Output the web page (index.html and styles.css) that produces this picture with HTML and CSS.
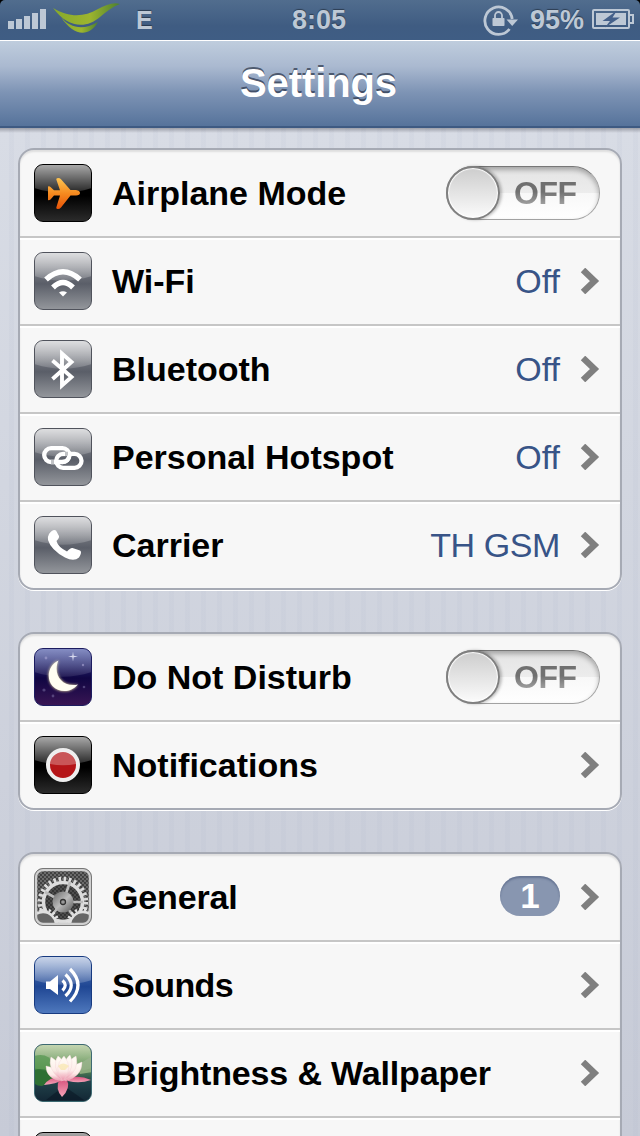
FILE: index.html
```html
<!DOCTYPE html>
<html lang="en">
<head>
  <meta charset="UTF-8">
  <meta name="viewport" content="width=device-width, initial-scale=1.0">
  <title>Settings</title>
  <link rel="stylesheet" href="styles.css">
</head>
<body>
  <!-- shared shapes -->
  <svg class="defs" width="0" height="0">
    <defs>
      <linearGradient id="glossFill" x1="0" y1="0" x2="0" y2="1">
        <stop offset="0" stop-color="#fff" stop-opacity=".68"/>
        <stop offset="1" stop-color="#fff" stop-opacity=".14"/>
      </linearGradient>
      <linearGradient id="orange" x1="0" y1="0" x2="0" y2="1">
        <stop offset="0" stop-color="#ffc653"/>
        <stop offset=".5" stop-color="#f58a1f"/>
        <stop offset="1" stop-color="#e75208"/>
      </linearGradient>
      <linearGradient id="leaf" x1="0" y1="0" x2="1" y2="0">
        <stop offset="0" stop-color="#86a92c"/>
        <stop offset=".55" stop-color="#9db52e"/>
        <stop offset="1" stop-color="#4c8030"/>
      </linearGradient>
      <linearGradient id="steel" x1="0" y1="0" x2="1" y2="1">
        <stop offset="0" stop-color="#666"/>
        <stop offset=".5" stop-color="#bbb"/>
        <stop offset="1" stop-color="#555"/>
      </linearGradient>
      <linearGradient id="petal" x1="0" y1="0" x2="0" y2="1">
        <stop offset="0" stop-color="#fffdf5"/>
        <stop offset=".6" stop-color="#fdebe8"/>
        <stop offset="1" stop-color="#ea8fa8"/>
      </linearGradient>
      <linearGradient id="petalPink" x1="0" y1="0" x2="0" y2="1">
        <stop offset="0" stop-color="#d8567f"/>
        <stop offset="1" stop-color="#f5a3b8"/>
      </linearGradient>
      <linearGradient id="pond" x1="0" y1="0" x2="0" y2="1">
        <stop offset="0" stop-color="#b9cda0"/>
        <stop offset=".4" stop-color="#5d9053"/>
        <stop offset=".65" stop-color="#21424a"/>
        <stop offset="1" stop-color="#122634"/>
      </linearGradient>
      <pattern id="mesh" width="4" height="4" patternUnits="userSpaceOnUse">
        <rect width="4" height="4" fill="#6a6a6a"/>
        <circle cx="1" cy="1" r=".9" fill="#2c2c2c"/>
        <circle cx="3" cy="3" r=".9" fill="#2c2c2c"/>
      </pattern>
      <path id="gloss" d="M0 0H58V24Q29 33.500 0 24Z" fill="url(#glossFill)"/>
      <path id="chevron" d="M3 2L14.500 13L3 24" fill="none" stroke="#7f7f7f" stroke-width="6.400"/>
    </defs>
  </svg>

  <header class="status-bar">
    <div class="status-left">
      <svg class="signal" width="38" height="20" viewBox="0 0 38 20">
        <path d="M0 12h6v8H0zM8 10h6v10H8zM16 7h6v13h-6zM24 4h6v16h-6zM32 0h6v20h-6z" fill="#bdc8d5"/>
      </svg>
      <svg class="carrier-logo" width="67" height="31" viewBox="0 0 67 31">
        <path d="M0 5C17 15 31 14 45 6C53 2 60-1 67 1C59 4 53 9 47 14C33 26 15 25 0 5Z" fill="url(#leaf)"/>
        <path d="M8 14C17 25 30 28 45 19C36 35 20 33 8 14Z" fill="url(#leaf)"/>
      </svg>
      <span class="network">E</span>
    </div>
    <span class="clock">8:05</span>
    <div class="status-right">
      <svg width="35" height="32" viewBox="0 0 35 32">
        <path d="M26.500 25A13.700 13.700 0 1 1 29.200 15" fill="none" stroke="#bdc8d5" stroke-width="2.800"/>
        <path d="M23.500 15.500H35L29.200 22Z" fill="#bdc8d5"/>
        <rect x="9.500" y="14" width="12" height="8" rx=".8" fill="#bdc8d5"/>
        <path d="M12 14v-2.500a3.500 3.500 0 0 1 7 0V14" fill="none" stroke="#bdc8d5" stroke-width="1.800"/>
      </svg>
      <span class="percent">95%</span>
      <svg class="battery" width="42" height="20" viewBox="0 0 42 20">
        <rect x="1" y="1" width="36" height="18" rx="1" fill="none" stroke="#bdc8d5" stroke-width="2"/>
        <rect x="4" y="4" width="30" height="12" fill="#bdc8d5"/>
        <path d="M38 6h3v8h-3" fill="none" stroke="#bdc8d5" stroke-width="2"/>
        <path d="M25 1.500L10.500 12H18L13 18.500L28 8.500H20.500Z" fill="#44608a"/>
      </svg>
    </div>
  </header>

  <nav class="nav-bar">
    <h1>Settings</h1>
  </nav>

  <main>
    <ul class="group">
      <li class="row">
        <svg class="icon black" viewBox="1 1 56 56">
          <use href="#gloss"/>
          <path d="M14 22.500Q15.500 22 16.500 23L20 26.200H26L22.300 15.500Q22 14 24 14Q26 14 27 15.200L36.500 26H42Q46 26.500 46 29Q46 31.200 42 31.600H36.500L27 43.500Q25.500 45 24 45Q22 45 22.300 43.500L26 31.600H20L16.500 35.500Q15 36.500 14 36Z" fill="url(#orange)"/>
        </svg>
        <span class="label">Airplane Mode</span>
        <span class="switch"><span class="knob"></span><span class="off">OFF</span></span>
      </li>
      <li class="row">
        <svg class="icon gray" viewBox="1 1 56 56">
          <use href="#gloss"/>
          <g fill="none" stroke="#fff" stroke-width="5.400">
            <path d="M12 27.500Q29 12 46 27.500"/>
            <path d="M19 35.500Q29 25.500 39 35.500"/>
          </g>
          <path d="M25 40.500Q29 38 33 40.500L29 44.500Z" fill="#fff"/>
        </svg>
        <span class="label">Wi-Fi</span>
        <span class="value">Off</span>
        <svg class="chevron" viewBox="0 0 20 26"><use href="#chevron"/></svg>
      </li>
      <li class="row">
        <svg class="icon gray" viewBox="1 1 56 56">
          <use href="#gloss"/>
          <path d="M18.500 20.500L37.500 37L28 45.500V13.500L37.500 22L18.500 39" fill="none" stroke="#fff" stroke-width="3.900"/>
        </svg>
        <span class="label">Bluetooth</span>
        <span class="value">Off</span>
        <svg class="chevron" viewBox="0 0 20 26"><use href="#chevron"/></svg>
      </li>
      <li class="row">
        <svg class="icon gray" viewBox="1 1 56 56">
          <use href="#gloss"/>
          <g fill="none" stroke-width="4.300">
            <rect x="10.200" y="20.200" width="25.200" height="13.800" rx="6.900" stroke="#fff"/>
            <rect x="22.200" y="25.900" width="25.300" height="13.900" rx="6.900" stroke="#fff"/>
            <path d="M17 34h3M31 25.900h3" stroke="#c0c2c5"/>
            <path d="M35.400 27.500A6.900 6.900 0 0 1 28.500 34" stroke="#fff"/>
          </g>
        </svg>
        <span class="label">Personal Hotspot</span>
        <span class="value">Off</span>
        <svg class="chevron" viewBox="0 0 20 26"><use href="#chevron"/></svg>
      </li>
      <li class="row">
        <svg class="icon gray" viewBox="1 1 56 56">
          <use href="#gloss"/>
          <path d="M15 18Q19 12.500 22 14.500L25 20Q25.500 22 22.500 25Q24 31 33 35.500Q36.500 31.500 38.500 32L46 34.500Q48.500 36 45 41.500Q40 46 31 41.500Q17 34 14 24Q13.500 20.500 15 18Z" fill="#fff"/>
        </svg>
        <span class="label">Carrier</span>
        <span class="value snug">TH GSM</span>
        <svg class="chevron" viewBox="0 0 20 26"><use href="#chevron"/></svg>
      </li>
    </ul>

    <ul class="group">
      <li class="row">
        <svg class="icon night" viewBox="1 1 56 56">
          <use href="#gloss" opacity=".6"/>
          <g fill="#a9a5d4">
            <path d="M39 3.500L39.700 7.700L44 8.500L39.700 9.300L39 13.500L38.300 9.300L34 8.500L38.300 7.700Z" fill="#d7d9ee"/>
            <g opacity=".6">
              <circle cx="12" cy="10" r="1.400"/>
              <circle cx="49" cy="17" r="1.200"/>
            </g>
            <g opacity=".35">
              <circle cx="10" cy="42" r="1.600"/>
              <circle cx="50" cy="39" r="1.300"/>
              <circle cx="19" cy="48" r="1.400"/>
            </g>
          </g>
          <path class="moon" d="M24.500 12.500C18.500 25 27 40 44 36.500C36 45.500 25 44.500 18.500 38C12 30.500 14 17.500 24.500 12.500Z" fill="#fffef2"/>
        </svg>
        <span class="label">Do Not Disturb</span>
        <span class="switch"><span class="knob"></span><span class="off">OFF</span></span>
      </li>
      <li class="row">
        <svg class="icon black" viewBox="1 1 56 56">
          <use href="#gloss"/>
          <circle cx="29" cy="29" r="15" fill="#b51518" stroke="#eee" stroke-width="4"/>
          <path d="M16 28A13 13 0 0 1 42 28Q29 30.500 16 28Z" fill="#fff" fill-opacity=".28"/>
        </svg>
        <span class="label">Notifications</span>
        <svg class="chevron" viewBox="0 0 20 26"><use href="#chevron"/></svg>
      </li>
    </ul>

    <ul class="group">
      <li class="row">
        <svg class="icon gear" viewBox="1 1 56 56">
          <rect x="3" y="3" width="52" height="52" rx="4" fill="url(#mesh)"/>
          <svg x="3" y="3" width="52" height="52" viewBox="3 3 52 52">
            <circle cx="29" cy="34" r="18" fill="#222" fill-opacity=".4"/>
            <g fill="none" stroke="#dcdcdc">
              <circle cx="29" cy="34" r="19.500" stroke-width="3.500"/>
              <circle cx="29" cy="34" r="23" stroke-width="4.500" stroke-dasharray="2.500 2.660"/>
              <path d="M29 34L36 14M29 34L11 24M29 34H49M29 34L16 49M29 34L41 50" stroke="#bbb" stroke-width="2.600"/>
            </g>
            <circle cx="29" cy="34" r="10.500" fill="url(#steel)"/>
            <circle cx="29" cy="34" r="2.500" fill="#999" stroke="#333" stroke-width="1.300"/>
            <g fill="#666" stroke="#e0e0e0">
              <circle cx="9" cy="57" r="13" stroke-width="2.500"/>
              <circle cx="49" cy="57" r="13" stroke-width="2.500"/>
              <g fill="none" stroke-width="3.500" stroke-dasharray="2.300 2.300">
                <circle cx="9" cy="57" r="15.500"/>
                <circle cx="49" cy="57" r="15.500"/>
              </g>
            </g>
          </svg>
          <rect x="2" y="2" width="54" height="54" rx="7" fill="none" stroke="#d0d0d0" stroke-width="2.500"/>
        </svg>
        <span class="label snug">General</span>
        <span class="badge">1</span>
        <svg class="chevron" viewBox="0 0 20 26"><use href="#chevron"/></svg>
      </li>
      <li class="row">
        <svg class="icon blue" viewBox="1 1 56 56">
          <use href="#gloss"/>
          <path d="M12 25.500H16L24 19V39L16 33H12Z" fill="#fff"/>
          <g fill="none" stroke="#fff" stroke-width="3.200">
            <path d="M28.500 24.500Q34 29 28.500 34.500"/>
            <path d="M31.500 18.500Q43 29 31.500 40"/>
            <path d="M36 13Q52 29 36 45.500"/>
          </g>
        </svg>
        <span class="label tight">Sounds</span>
        <svg class="chevron" viewBox="0 0 20 26"><use href="#chevron"/></svg>
      </li>
      <li class="row">
        <svg class="icon photo" viewBox="1 1 56 56">
          <rect width="58" height="58" fill="url(#pond)"/>
          <path d="M0 12Q14 8 20 20L12 34L0 38Z" fill="#4f9147"/>
          <path d="M58 12L42 22L46 30L58 28Z" fill="#8aa97c"/>
          <path d="M0 26Q12 22 24 34L8 42Q2 42 0 39Z" fill="#2d7033"/>
          <path d="M30 42L50 56H12Z" fill="#0a1824" opacity=".6"/>
          <g fill="url(#petalPink)">
            <path d="M28 33Q16 32 10 41Q22 40 29 36Z"/>
            <path d="M32 35Q44 30 57 36Q46 40 34 37Z"/>
            <path d="M25 36Q21 45 28 53Q37 44 33 36Z"/>
          </g>
          <g fill="url(#petal)" stroke="#f3cfd3" stroke-width=".4">
            <path d="M28 37Q12 35 12 22Q22 23 30 34Z"/>
            <path d="M31 37Q48 33 48 18Q37 21 29 34Z"/>
            <path d="M27 36Q13 25 17 13Q27 18 31 35Z"/>
            <path d="M31 36Q46 26 42 12Q32 17 28 35Z"/>
            <path d="M28 36Q17 22 24 12Q31 16 32 35Z"/>
            <path d="M30 36Q42 23 36 11Q29 16 27 35Z"/>
            <path d="M29 37Q18 24 30 12Q40 24 29 37Z"/>
          </g>
          <path d="M24 22Q29 17 35 22L31 26H27Z" fill="#f6e39a" opacity=".6"/>
          <use href="#gloss" opacity=".3"/>
        </svg>
        <span class="label snug">Brightness &amp; Wallpaper</span>
        <svg class="chevron" viewBox="0 0 20 26"><use href="#chevron"/></svg>
      </li>
      <li class="row">
        <svg class="icon black" viewBox="1 1 56 56"><use href="#gloss"/></svg>
      </li>
    </ul>
  </main>
</body>
</html>
```
FILE: styles.css
```css
* {
    box-sizing: border-box;
}
body {
    margin: 0;
    height: 1136px;
    overflow: hidden;
    font-family: "Liberation Sans", Arial, sans-serif;
    background-color: #000;
}
.defs {
    display: block;
}

/* status bar */
.status-bar {
    display: grid;
    grid-template-columns: 1fr auto 1fr;
    align-items: center;
    height: 40px;
    padding: 0 6px 0 8px;
    border-radius: 5px 5px 0 0;
    background: linear-gradient(#516d8e, #3f5c82 65%, #3f5d84);
    color: #bdc8d5;
    font-size: 27px;
    font-weight: bold;
    text-shadow: 0 -1px 1px rgba(0, 0, 0, 0.4);
}
.status-left,
.status-right {
    display: flex;
    align-items: center;
}
.signal {
    margin-top: -2px;
}
.status-right {
    justify-content: flex-end;
}
.carrier-logo {
    margin: -4px 16px 0 7px;
}
.network {
    font-size: 25px;
}
.clock {
    margin-right: 4px;
    font-size: 27px;
}
.percent {
    margin: 0 8px 0 12px;
    font-size: 27px;
}
.battery {
    margin-top: -2px;
}

/* title bar */
.nav-bar {
    display: flex;
    align-items: center;
    justify-content: center;
    height: 88px;
    padding-right: 3px;
    border-top: 1px solid #fff;
    border-bottom: 2px solid #3e5a82;
    background: linear-gradient(#bfcddd, #aab9d0 30%, #7e94b5 60%, #56739b);
}
.nav-bar h1 {
    margin: 0;
    font-size: 40px;
    letter-spacing: -0.1px;
    color: #fff;
    text-shadow: 0 -2px 0 rgba(40, 50, 70, 0.7);
}

/* list */
main {
    display: flex;
    flex-direction: column;
    gap: 42px;
    height: 1008px;
    padding: 20px 18px 0;
    overflow: hidden;
    background:
        linear-gradient(rgba(70, 70, 80, 0.4), rgba(70, 70, 80, 0) 5px),
        repeating-linear-gradient(90deg, transparent 0 9px, rgba(160, 170, 195, 0.08) 9px 14px, transparent 14px 16px),
        linear-gradient(#d8dce5, #c7cbd7);
}
.group {
    flex: none;
    margin: 0;
    padding: 0;
    list-style: none;
    border: 2px solid #a6aab4;
    border-radius: 16px;
    background-color: #f7f7f7;
    box-shadow: 0 1px 0 #fff, inset 0 2px 2px rgba(0, 0, 0, 0.1);
}
.row {
    display: flex;
    align-items: center;
    height: 88px;
    padding: 0 20px 0 14px;
    border-bottom: 2px solid #c6c6c6;
}
.row + .row {
    box-shadow: inset 0 2px 0 #fff;
}
.row:last-child {
    height: 86px;
    border-bottom: none;
}
.label {
    flex: 1;
    margin-left: 20px;
    font-size: 34px;
    font-weight: bold;
    white-space: nowrap;
    color: #000;
}
.value {
    margin-right: 1px;
    font-size: 34px;
    color: #385487;
}
.snug {
    letter-spacing: -0.15px;
}
.tight {
    letter-spacing: -0.6px;
}
.value.snug {
    margin-right: 0;
    letter-spacing: -0.4px;
}
.chevron {
    width: 20px;
    height: 26px;
    margin-left: 20px;
}
.value + .chevron {
    margin-left: 19px;
}
.value.snug + .chevron {
    margin-left: 20px;
}
.badge {
    width: 60px;
    height: 40px;
    margin-top: -2px;
    border-radius: 20px;
    background-color: #8896b0;
    box-shadow: inset 0 2px 2px rgba(60, 75, 110, 0.45);
    color: #fff;
    font-size: 35px;
    font-weight: bold;
    line-height: 39px;
    text-align: center;
}

/* switch */
.switch {
    display: flex;
    align-items: center;
    width: 154px;
    height: 54px;
    border: 1px solid #a2a2a2;
    border-top-color: #777;
    border-radius: 27px;
    background: linear-gradient(#e4e4e4, #ececec 49%, #f8f8f8 51%, #fff);
    box-shadow: inset 0 3px 5px rgba(0, 0, 0, 0.28);
}
.knob {
    flex: none;
    width: 54px;
    height: 54px;
    margin-left: -1px;
    border: 2px solid #808080;
    border-radius: 50%;
    background: linear-gradient(#cdcdcd, #fbfbfb);
    box-shadow: inset 0 0 1px 1px #fff, 2px 0 3px rgba(0, 0, 0, 0.25);
}
.off {
    margin: 1px 0 0 14px;
    font-size: 32px;
    font-weight: bold;
    letter-spacing: -0.5px;
    background: linear-gradient(#707070 45%, #a0a0a0 80%);
    background-clip: text;
    -webkit-background-clip: text;
    color: transparent;
}

/* icon tiles */
.icon {
    flex: none;
    width: 58px;
    height: 58px;
    border: 1px solid #50535c;
    border-radius: 9px;
}
.black {
    border-color: #000;
    background: linear-gradient(#000 55%, #2b2b2b);
}
.gray {
    background: linear-gradient(#9a9ca1, #5a5e68 55%, #93969b);
}
.night {
    border-color: #1c1c60;
    background: linear-gradient(#34429b, #100643 52%, #381553);
}
.moon {
    filter: drop-shadow(0 0 1.5px #fff3b0);
}
.gear {
    border-color: #777;
    background-color: #666;
}
.blue {
    border-color: #173a80;
    background: linear-gradient(#5d80bd, #1f4693 53%, #4e78bd);
}
.photo {
    border-color: #3d6a72;
    background-color: #1c3640;
}
```
